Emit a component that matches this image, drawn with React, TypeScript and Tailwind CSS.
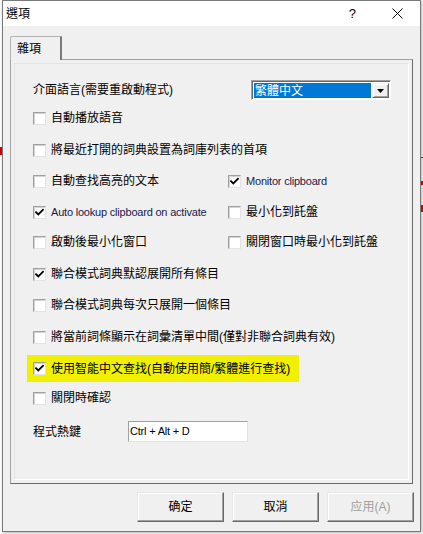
import React from 'react';

const ui = "font-['Liberation_Sans','Noto_Sans_CJK_TC',sans-serif]";

function Check({ checked }: { checked?: boolean }) {
  return (
    <span className="w-[13px] h-[13px] shrink-0 bg-white border-t border-l border-[#a0a0a0] border-r-[#e3e3e3] border-b-[#e3e3e3] border-r border-b shadow-[inset_1px_1px_0_#d4d4d4] flex items-center justify-center">
      {checked && (
        <svg width="9" height="9" viewBox="0 0 9 9">
          <path d="M1 4.2 L3.3 6.5 L8 1.8" fill="none" stroke="#000" strokeWidth="1.8" strokeLinecap="square" />
        </svg>
      )}
    </span>
  );
}

function Opt({ label, checked, en }: { label: string; checked?: boolean; en?: boolean }) {
  return (
    <div className="flex items-center gap-[5px]">
      <Check checked={checked} />
      <span className={en ? 'text-[11px] tracking-[-0.2px] text-[#1a1a4a]' : 'text-[12px] text-black'}>{label}</span>
    </div>
  );
}

function WinButton({ children, disabled }: { children: React.ReactNode; disabled?: boolean }) {
  return (
    <div className="w-[87px] h-[30px] border border-t-[#e8e8e8] border-l-[#e8e8e8] border-r-[#696969] border-b-[#696969] shadow-[inset_-1px_-1px_0_#a0a0a0,inset_1px_1px_0_#ffffff] bg-[#f0f0f0] flex items-center justify-center">
      <span className={disabled ? 'text-[12px] text-[#a0a0a0]' : 'text-[12px] text-black'}>{children}</span>
    </div>
  );
}

export default function App() {
  return (
    <div className={`relative w-[423px] h-[534px] bg-white ${ui}`}>
      <span className="absolute left-0 top-[147px] w-[2px] h-[8px] bg-[#d10000]" />
      <span className="absolute left-[421px] top-[157px] w-[2px] h-[1px] bg-[#d10000]" />
      <span className="absolute left-[421px] top-[181px] w-[2px] h-[4px] bg-[#d10000]" />
      <span className="absolute left-[421px] top-[205px] w-[2px] h-[7px] bg-[#d10000]" />

      <div className="ml-[2px] w-[419px] h-[532px] border border-[#7a7a7a] bg-[#f0f0f0] shadow-[1px_1px_3px_rgba(0,0,0,0.3)] flex flex-col">
        {/* title bar */}
        <div className="h-[25px] bg-white flex items-center pl-[3px] pr-[17px] shrink-0">
          <span className="text-[12px] text-black">選項</span>
          <span className="ml-auto text-[13px] text-black leading-none">?</span>
          <svg className="ml-[36px]" width="11" height="11" viewBox="0 0 11 11">
            <path d="M0.5 0.5 L10.5 10.5 M10.5 0.5 L0.5 10.5" stroke="#000" strokeWidth="1" />
          </svg>
        </div>

        {/* body */}
        <div className="flex-1 flex flex-col pl-[7px] pr-[6px] pt-[10px]">
          <div className="relative z-10 w-[52px] h-[24px] -mb-[1px] bg-[#f0f0f0] border-t border-l border-[#b4b4b4] border-r-2 border-r-[#7a7a7a] rounded-tl-[2px] flex items-center pl-[6px]">
            <span className="text-[12px] text-black">雜項</span>
          </div>

          <div className="w-[403px] h-[425px] border border-t-[#a0a0a0] border-l-[#a0a0a0] border-r-[#696969] border-b-[#696969] p-[3px]">
            <div className="h-full border border-t-[#e3e3e3] border-l-[#e3e3e3] border-r-white border-b-white pl-[18px] flex flex-col">
              <div className="mt-[16px] h-[20px] flex items-center">
                <span className="w-[218px] text-[12px] text-black">介面語言(需要重啟動程式)</span>
                <div className="w-[140px] h-[20px] border border-t-[#a0a0a0] border-l-[#a0a0a0] border-r-white border-b-white shadow-[inset_1px_1px_0_#696969] bg-white pl-[2px] pt-[2px] pr-[1px] pb-[1px] flex">
                  <div className="flex-1 bg-[#0078d7] flex items-center pl-[1px]">
                    <span className="text-[12px] text-white leading-none">繁體中文</span>
                  </div>
                  <div className="w-[17px] ml-[1px] bg-[#f0f0f0] border border-t-[#f0f0f0] border-l-[#f0f0f0] border-r-[#696969] border-b-[#696969] shadow-[inset_1px_1px_0_#ffffff,inset_-1px_-1px_0_#a0a0a0] flex items-center justify-center">
                    <svg width="7" height="4" viewBox="0 0 7 4">
                      <path d="M0 0 H7 L3.5 4 Z" fill="#000" />
                    </svg>
                  </div>
                </div>
              </div>

              <div className="mt-[8px] h-[20px] flex items-center">
                <Opt label="自動播放語音" />
              </div>
              <div className="mt-[12px] h-[20px] flex items-center">
                <Opt label="將最近打開的詞典設置為詞庫列表的首項" />
              </div>
              <div className="mt-[11px] h-[20px] flex items-center">
                <div className="w-[195px]"><Opt label="自動查找高亮的文本" /></div>
                <Opt label="Monitor clipboard" checked en />
              </div>
              <div className="mt-[11px] h-[20px] flex items-center">
                <div className="w-[195px]"><Opt label="Auto lookup clipboard on activate" checked en /></div>
                <Opt label="最小化到託盤" />
              </div>
              <div className="mt-[10px] h-[20px] flex items-center">
                <div className="w-[195px]"><Opt label="啟動後最小化窗口" /></div>
                <Opt label="關閉窗口時最小化到託盤" />
              </div>
              <div className="mt-[12px] h-[20px] flex items-center">
                <Opt label="聯合模式詞典默認展開所有條目" checked />
              </div>
              <div className="mt-[11px] h-[20px] flex items-center">
                <Opt label="聯合模式詞典每次只展開一個條目" />
              </div>
              <div className="mt-[12px] h-[20px] flex items-center">
                <Opt label="將當前詞條顯示在詞彙清單中間(僅對非聯合詞典有效)" />
              </div>
              <div className="mt-[8px] -ml-[6px] pl-[6px] w-[272px] h-[27px] bg-[#f0f000] flex items-center">
                <Opt label="使用智能中文查找(自動使用簡/繁體進行查找)" checked />
              </div>
              <div className="mt-[6px] h-[20px] flex items-center">
                <Opt label="關閉時確認" />
              </div>
              <div className="mt-[13px] h-[21px] flex items-center">
                <span className="w-[95px] text-[12px] text-black">程式熱鍵</span>
                <div className="w-[120px] h-[21px] bg-white border border-t-[#a0a0a0] border-l-[#a0a0a0] border-r-[#e3e3e3] border-b-[#e3e3e3] flex items-center pl-[1px]">
                  <span className="text-[11px] tracking-[-0.2px] text-black">Ctrl + Alt + D</span>
                </div>
              </div>
            </div>
          </div>

          <div className="mt-[8px] flex justify-end gap-[8px]">
            <WinButton>确定</WinButton>
            <WinButton>取消</WinButton>
            <WinButton disabled>应用(A)</WinButton>
          </div>
        </div>
      </div>
    </div>
  );
}
